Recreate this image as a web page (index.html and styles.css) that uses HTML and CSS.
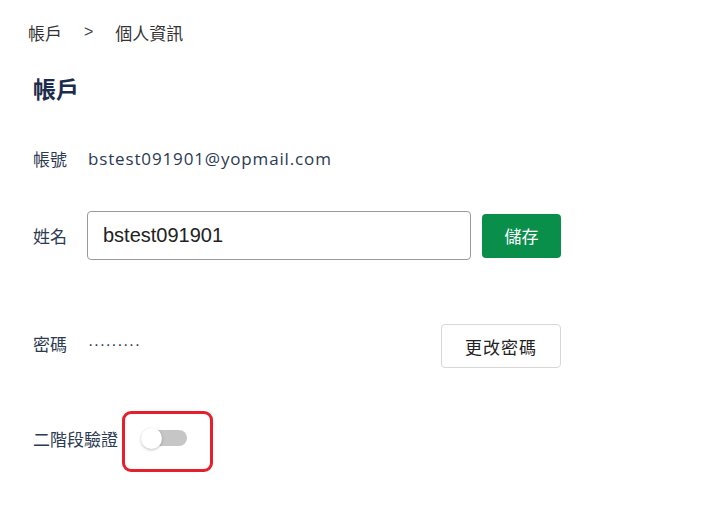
FILE: index.html
```html
<!DOCTYPE html>
<html lang="zh-Hant">
<head>
<meta charset="utf-8">
<title>個人資訊</title>
<link rel="stylesheet" href="styles.css">
</head>
<body>
<nav class="breadcrumb">
  <span>帳戶</span>
  <span class="sep">&gt;</span>
  <span>個人資訊</span>
</nav>
<main class="account">
  <h1 class="title">帳戶</h1>
  <div class="row row-email">
    <span class="label">帳號</span>
    <span class="email">bstest091901@yopmail.com</span>
  </div>
  <div class="row row-name">
    <span class="label">姓名</span>
    <input class="name-input" type="text" value="bstest091901">
    <button class="btn-save">儲存</button>
  </div>
  <div class="row row-pass">
    <span class="label">密碼</span>
    <span class="dots">·········</span>
    <button class="btn-outline">更改密碼</button>
  </div>
  <div class="row row-2fa">
    <span class="label-wide">二階段驗證</span>
    <span class="toggle">
      <span class="track"></span>
      <span class="knob"></span>
      <span class="highlight"></span>
    </span>
  </div>
</main>
</body>
</html>
```
FILE: styles.css
```css
* { box-sizing: border-box; }
html, body { height: 100%; }
body {
  margin: 0;
  overflow: hidden;
  background: #fff;
  font-family: "Noto Sans CJK TC", "Noto Sans", sans-serif;
  color: #2c3a52;
}
.breadcrumb {
  display: flex;
  align-items: center;
  gap: 22px;
  height: 24px;
  margin-top: 20px;
  padding-left: 28px;
  font-size: 17px;
  color: #333;
}
.breadcrumb .sep {
  font-family: "Liberation Sans", sans-serif;
  font-size: 16px;
  color: #444;
}
.account {
  padding-left: 33px;
  width: 561px;
}
.title {
  margin: 28px 0 0;
  height: 32px;
  line-height: 32px;
  font-size: 23px;
  font-weight: 700;
  color: #1c2c4c;
}
.row {
  display: flex;
  align-items: center;
}
.label {
  width: 55px;
  flex: none;
  font-size: 17px;
  color: #2c3a52;
}
.row-email {
  margin-top: 38px;
  height: 32px;
}
.email {
  font-family: "Open Sans", sans-serif;
  font-size: 17px;
  letter-spacing: 0.85px;
  color: #2c3a52;
}
.row-name {
  margin-top: 37px;
  height: 49px;
}
.name-input {
  width: 384px;
  height: 49px;
  margin-left: -1px;
  padding: 0 15px;
  border: 1px solid #9a9a9a;
  border-radius: 4px;
  font-family: "Liberation Sans", sans-serif;
  font-size: 20px;
  color: #222;
  outline: none;
}
.btn-save {
  margin-left: 11px;
  width: 79px;
  height: 44px;
  border: none;
  border-radius: 4px;
  background: #0a8f4b;
  color: #fff;
  font-family: "Noto Sans CJK TC", sans-serif;
  font-size: 17px;
}
.row-pass {
  margin-top: 64px;
  height: 44px;
  align-items: flex-start;
}
.row-pass .label {
  margin-top: 8px;
  line-height: 24px;
}
.dots {
  margin-top: 11px;
  line-height: 20px;
  font-family: "Liberation Sans", sans-serif;
  font-size: 16px;
  letter-spacing: 0.5px;
  color: #2c3a52;
}
.btn-outline {
  margin-left: auto;
  width: 120px;
  height: 44px;
  background: #fff;
  border: 1px solid #d8d8d8;
  border-radius: 4px;
  font-family: "Noto Sans CJK TC", sans-serif;
  font-size: 17px;
  letter-spacing: 1px;
  color: #222;
}
.row-2fa {
  margin-top: 58px;
  height: 24px;
}
.label-wide {
  font-size: 17px;
  color: #2c3a52;
}
.toggle {
  position: relative;
  margin-left: 22px;
  width: 48px;
  height: 21px;
}
.track {
  position: absolute;
  left: 6px;
  top: 2px;
  width: 41px;
  height: 16px;
  border-radius: 8px;
  background: #c6c6c6;
}
.knob {
  position: absolute;
  left: 1px;
  top: 0;
  width: 21px;
  height: 21px;
  border-radius: 50%;
  background: #fff;
  box-shadow: 0 1px 3px rgba(0,0,0,0.25);
}
.highlight {
  position: absolute;
  left: -18px;
  top: -17px;
  width: 91px;
  height: 61px;
  border: 3px solid #e5202a;
  border-radius: 9px;
}
```
